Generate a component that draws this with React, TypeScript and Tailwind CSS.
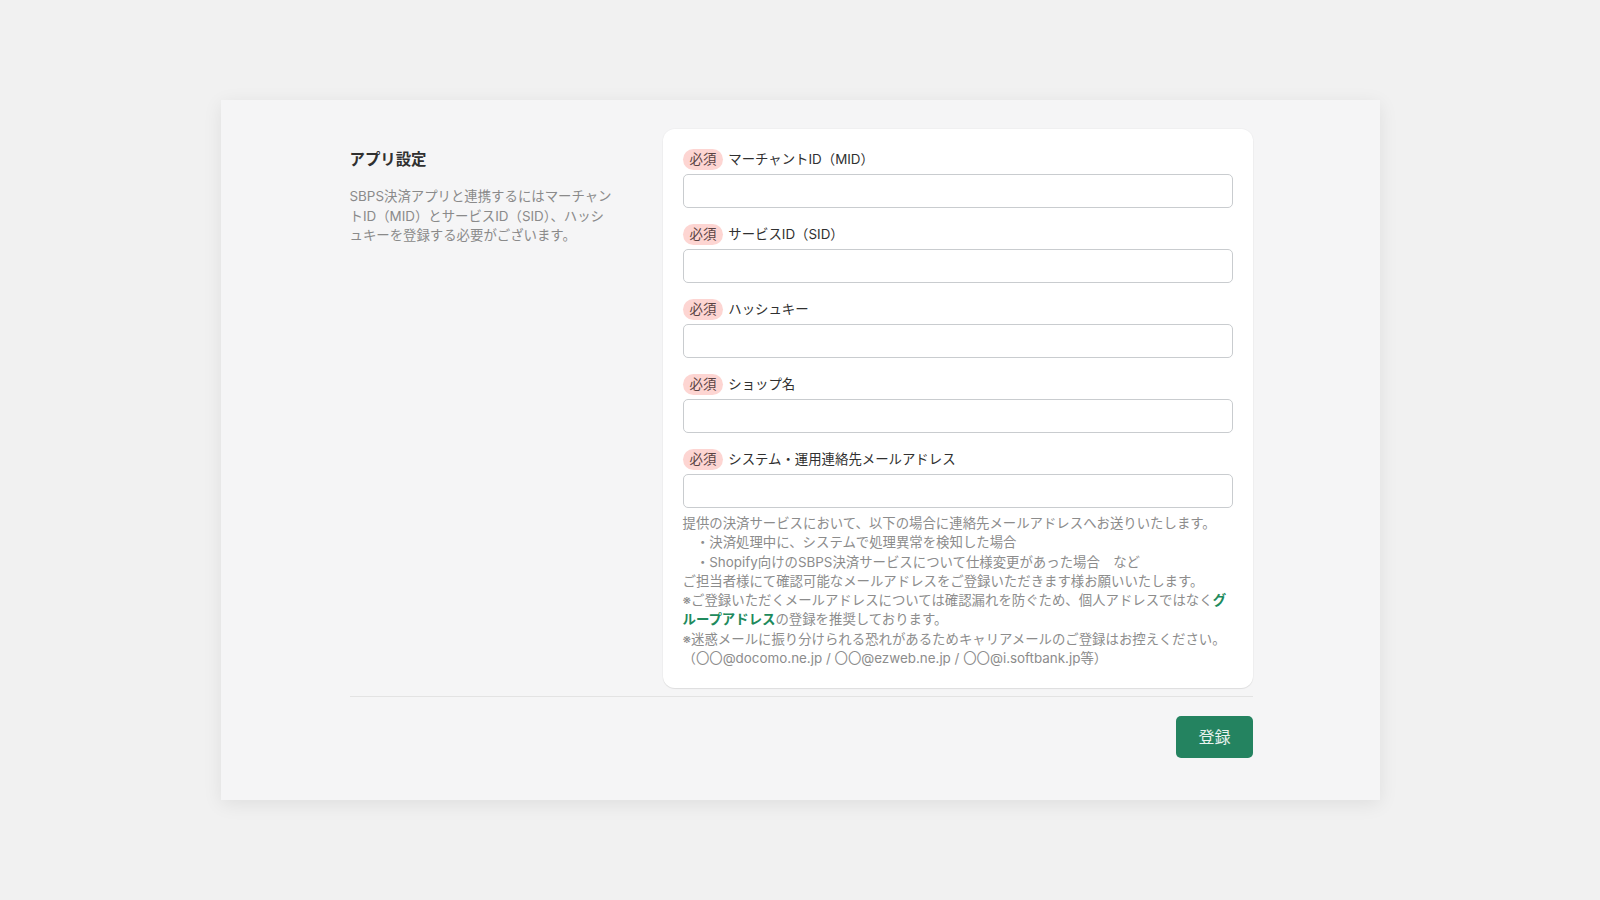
import React from 'react';

const fields = [
  'マーチャントID（MID）',
  'サービスID（SID）',
  'ハッシュキー',
  'ショップ名',
  'システム・運用連絡先メールアドレス',
];

function Field({ label, children }: { label: string; children?: React.ReactNode }) {
  return (
    <div>
      <div className="flex items-center gap-[5px] h-[21px]">
        <span className="inline-flex items-center h-[21px] px-[7px] rounded-full bg-[#fdd5d2] text-[#5a4343] text-[13.4px] leading-none">
          必須
        </span>
        <span className="text-[13.4px] text-[#303030]">{label}</span>
      </div>
      <input
        type="text"
        className="mt-1 block w-full h-[34px] rounded-[5px] border border-[#c9cccf] bg-white px-3 text-[13px] outline-none"
      />
      {children}
    </div>
  );
}

export default function App() {
  return (
    <div
      className="min-h-[900px] bg-[#f1f1f1] pt-[100px]"
      style={{ fontFamily: 'Inter, "Noto Sans CJK JP", sans-serif' }}
    >
      <div className="mx-auto w-[1159px] bg-[#f5f5f6] pt-[29px] pb-[42px] shadow-[0_4px_18px_rgba(0,0,0,0.08)]">
        <div className="ml-[129px] w-[903px]">
          <div className="flex">
            <div className="w-[313px] shrink-0 pt-[21px] pr-8">
              <h2 className="text-[15.4px] leading-5 font-bold text-[#303030]">アプリ設定</h2>
              <p className="mt-[17px] text-[13.4px] leading-[19.7px] text-[#8a8a8a] whitespace-nowrap">
                SBPS決済アプリと連携するにはマーチャン
                <br />
                トID（MID）とサービスID（SID）、ハッシ
                <br />
                ュキーを登録する必要がございます。
              </p>
            </div>
            <div className="flex-1 rounded-xl bg-white p-5 shadow-[0_1px_1px_rgba(0,0,0,0.08),0_0_0_1px_rgba(0,0,0,0.02)]">
              <div className="flex flex-col gap-4">
                {fields.map((f, i) => (
                  <Field key={f} label={f}>
                    {i === fields.length - 1 && (
                      <div className="mt-[6px] text-[13.4px] leading-[19.3px] text-[#8c8c8c] whitespace-nowrap">
                        <p>提供の決済サービスにおいて、以下の場合に連絡先メールアドレスへお送りいたします。</p>
                        <p>　・決済処理中に、システムで処理異常を検知した場合</p>
                        <p>　・Shopify向けのSBPS決済サービスについて仕様変更があった場合　など</p>
                        <p>ご担当者様にて確認可能なメールアドレスをご登録いただきます様お願いいたします。</p>
                        <p>
                          ※ご登録いただくメールアドレスについては確認漏れを防ぐため、個人アドレスではなく
                          <span className="font-bold text-[#208a5c]">グ</span>
                          <br />
                          <span className="font-bold text-[#208a5c]">ループアドレス</span>の登録を推奨しております。
                        </p>
                        <p>※迷惑メールに振り分けられる恐れがあるためキャリアメールのご登録はお控えください。</p>
                        <p>（〇〇@docomo.ne.jp / 〇〇@ezweb.ne.jp / 〇〇@i.softbank.jp等）</p>
                      </div>
                    )}
                  </Field>
                ))}
              </div>
            </div>
          </div>
          <div className="mt-[8px] border-t border-[#e3e3e3] pt-[19px] flex justify-end">
            <button
              type="button"
              className="h-[42px] px-[22px] rounded-[5px] bg-[#248360] text-[16px] text-white/90"
            >
              登録
            </button>
          </div>
        </div>
      </div>
    </div>
  );
}
